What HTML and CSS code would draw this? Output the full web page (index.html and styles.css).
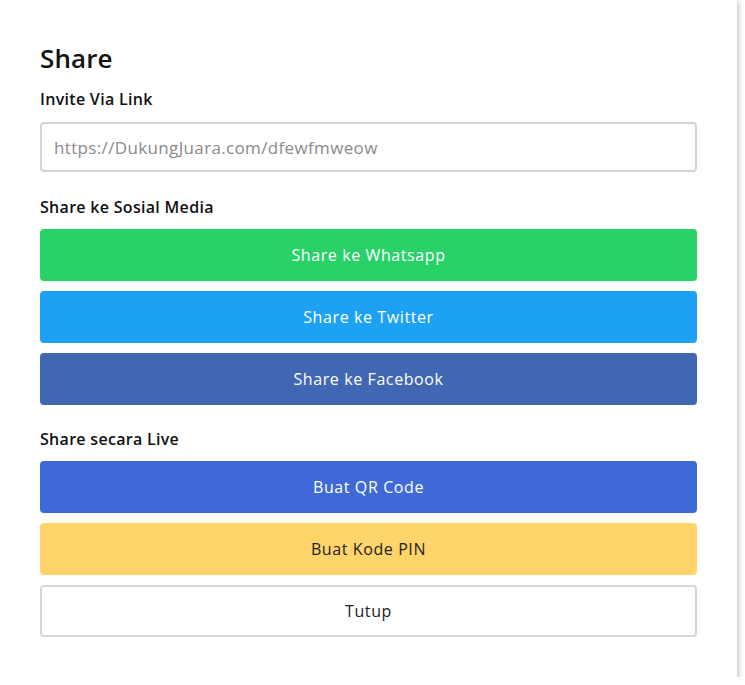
FILE: index.html
```html
<!DOCTYPE html>
<html lang="id">
<head>
<meta charset="utf-8">
<title>Share</title>
<link rel="stylesheet" href="styles.css">
</head>
<body>
<div class="card">
  <h1 class="title">Share</h1>
  <h2 class="label">Invite Via Link</h2>
  <input class="link-input" type="text" placeholder="https://DukungJuara.com/dfewfmweow">
  <h2 class="label label-gap">Share ke Sosial Media</h2>
  <div class="btn-group">
    <button class="btn btn-wa">Share ke Whatsapp</button>
    <button class="btn btn-tw">Share ke Twitter</button>
    <button class="btn btn-fb">Share ke Facebook</button>
  </div>
  <h2 class="label label-gap2">Share secara Live</h2>
  <div class="btn-group">
    <button class="btn btn-qr">Buat QR Code</button>
    <button class="btn btn-pin">Buat Kode PIN</button>
    <button class="btn btn-close">Tutup</button>
  </div>
</div>
</body>
</html>
```
FILE: styles.css
```css
* { box-sizing: border-box; }
html, body { margin: 0; padding: 0; background: #fff; }
body { font-family: "Open Sans", "DejaVu Sans", sans-serif; color: #111; }
.card {
  width: 737px;
  height: 677px;
  background: #fff;
  padding: 40px 40px 40px 40px;
  box-shadow: 2px 2px 5px rgba(0,0,0,0.22);
  display: flex;
  flex-direction: column;
}
.title {
  margin: 0;
  font-size: 26px;
  line-height: 36px;
  font-weight: 600;
  letter-spacing: 0.1px;
}
.label {
  margin: 12px 0 12px;
  font-size: 16px;
  line-height: 22px;
  font-weight: 600;
  letter-spacing: 0.3px;
}
.label-gap { margin-top: 24px; margin-bottom: 11px; }
.label-gap2 { margin-top: 23px; margin-bottom: 11px; }
.link-input {
  width: 657px;
  height: 50px;
  border: 2px solid #d4d4d4;
  border-radius: 4px;
  padding: 0 12px;
  font-family: inherit;
  font-size: 17px;
  letter-spacing: 0.35px;
  color: #333;
  outline: none;
}
.link-input::placeholder { color: #8a8a8a; }
.btn-group { display: flex; flex-direction: column; gap: 10px; }
.btn {
  height: 52px;
  width: 657px;
  border: none;
  border-radius: 4px;
  font-family: inherit;
  font-size: 16px;
  letter-spacing: 0.6px;
  font-weight: 500;
  color: #fff;
  padding: 0;
}
.btn-wa { background: #29d269; }
.btn-tw { background: #1da1f2; }
.btn-fb { background: #4267b2; }
.btn-qr { background: #3e69d7; }
.btn-pin { background: #ffd46b; color: #222; }
.btn-close { background: #fff; color: #222; border: 2px solid #d6d6d6; }
```
